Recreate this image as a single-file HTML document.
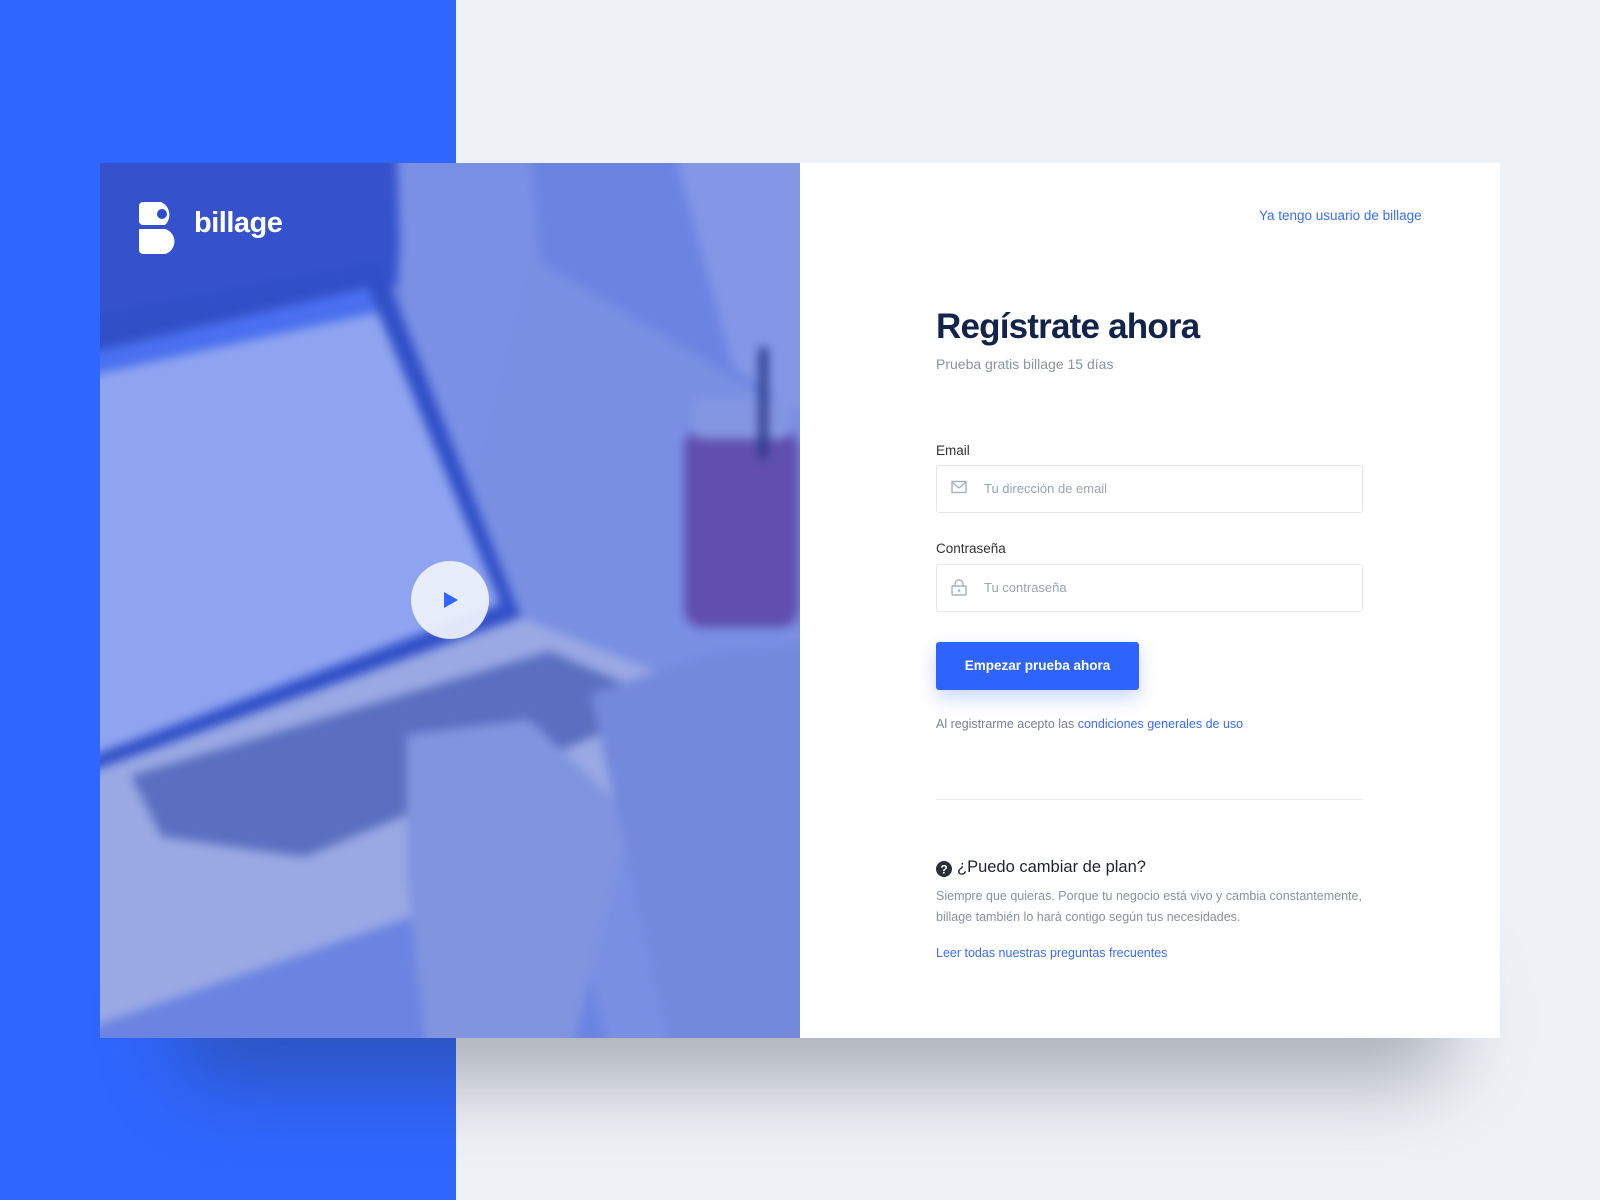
<!DOCTYPE html>
<html><head><meta charset="utf-8"><style>
*{margin:0;padding:0;box-sizing:border-box}
body{width:1600px;height:1200px;background:#eef1f5;position:relative;overflow:hidden;font-family:"Liberation Sans",sans-serif}
.blue{position:absolute;left:0;top:0;width:456px;height:1200px;background:#2f66fd}
.shadow{position:absolute;left:180px;top:960px;width:1270px;height:120px;background:rgba(40,50,70,.35);filter:blur(40px);border-radius:40px}
.card{position:absolute;left:100px;top:163px;width:1400px;height:875px;background:#fff;display:flex}
.img{width:700px;height:875px;position:relative;overflow:hidden;background:#6b84e2}
.form{position:relative;flex:1}
.a{position:absolute;white-space:nowrap}
.lnk{color:#3a6cf5}
.inp{position:absolute;left:136px;width:427px;height:48px;border:1px solid #e3e6ea;border-radius:3px}
.inp span{position:absolute;left:47px;top:15px;font-size:13px;color:#9aa3af}
.inp svg{position:absolute;left:14px;top:14px}
</style></head><body>
<div class="blue"></div>
<div class="shadow"></div>
<div class="card">
 <div class="img">
  <svg width="741" height="915" viewBox="-20 -20 726 897" preserveAspectRatio="none" style="position:absolute;left:-20px;top:-20px;filter:blur(5px)">
   <rect x="-20" y="-20" width="730" height="900" fill="#6b84e2"/>
   <polygon points="-20,-20 300,-20 290,120 -20,160" fill="#3552cc"/>
   <polygon points="290,-20 420,-20 440,200 360,330 300,300" fill="#7a90e4"/>
   <polygon points="560,-20 706,-20 706,260 620,200" fill="#8497e6"/>
   <polygon points="420,90 706,260 706,877 500,877 360,330" fill="#788fe2"/>
   <polygon points="-20,150 274,95 412,445 -20,600" fill="#3150c8"/>
   <polygon points="-20,188 262,122 392,432 -20,585" fill="#8fa4f0"/>
   <polygon points="-20,188 262,122 272,146 -20,210" fill="#4a70f0"/>
   <polygon points="-20,600 412,445 600,520 520,640 300,740 -20,850" fill="#9aa9e4"/>
   <polygon points="30,600 440,478 560,530 200,680 60,660" fill="#5a6fc0"/>
   <polygon points="300,560 420,545 520,640 460,877 320,877 300,700" fill="#8094e0"/>
   <polygon points="480,520 600,480 706,470 706,877 560,877" fill="#7389dc"/>
   <rect x="572" y="260" width="112" height="195" rx="18" fill="#604fae"/>
   <rect x="580" y="230" width="96" height="40" rx="10" fill="#8496e2"/>
   <rect x="645" y="180" width="9" height="110" rx="4" fill="#2b3a8a"/>
  </svg>
  <svg style="position:absolute;left:39px;top:39px" width="39" height="52" viewBox="0 0 39 52"><path d="M4 0h18a14 14 0 0 1 4 23v0h-22a4 4 0 0 1-4-4V4a4 4 0 0 1 4-4z" fill="#fff"/><circle cx="23" cy="12" r="5" fill="#2d4ccc"/><path d="M0 27h26a13 13 0 0 1 0 25H4a4 4 0 0 1-4-4z" fill="#fff"/></svg>
  <div class="a" style="left:94px;top:44px;color:#fff;font-size:29px;font-weight:bold;letter-spacing:-.5px">billage</div>
  <div class="a" style="left:311px;top:398px;width:78px;height:78px;border-radius:50%;background:rgba(240,243,252,.92)"></div>
  <svg class="a" style="left:343px;top:428px" width="16" height="18"><path d="M1 1L15 9L1 17z" fill="#2f66fd"/></svg>
 </div>
 <div class="form">
  <div class="a lnk" style="left:459px;top:45px;font-size:13.5px">Ya tengo usuario de billage</div>
  <div class="a" style="left:136px;top:144px;font-size:35px;font-weight:bold;color:#13244a;letter-spacing:-.8px">Regístrate ahora</div>
  <div class="a" style="left:136px;top:193px;font-size:14px;color:#8a93a2">Prueba gratis billage 15 días</div>
  <div class="a" style="left:136px;top:280px;font-size:13.5px;color:#333">Email</div>
  <div class="inp" style="top:302px"><svg width="16" height="14"><rect x="1" y="1.5" width="14" height="11" fill="none" stroke="#a8b0bc" stroke-width="1.4"/><path d="M1 2l7 6 7-6" fill="none" stroke="#a8b0bc" stroke-width="1.4"/></svg><span>Tu dirección de email</span></div>
  <div class="a" style="left:136px;top:378px;font-size:13.5px;color:#333">Contraseña</div>
  <div class="inp" style="top:401px"><svg width="16" height="17"><path d="M4 7V5a4 4 0 0 1 8 0v2" fill="none" stroke="#a8b0bc" stroke-width="1.4"/><rect x="1" y="7" width="14" height="9" rx="1" fill="none" stroke="#a8b0bc" stroke-width="1.4"/><circle cx="8" cy="11.5" r="1.3" fill="#a8b0bc"/></svg><span>Tu contraseña</span></div>
  <div class="a" style="left:136px;top:479px;width:203px;height:48px;background:#2e64fd;border-radius:3px;box-shadow:0 8px 18px rgba(46,100,253,.25);color:#fff;font-weight:bold;font-size:13.5px;text-align:center;line-height:48px">Empezar prueba ahora</div>
  <div class="a" style="left:136px;top:554px;font-size:12.5px;color:#7a828f">Al registrarme acepto las <span class="lnk">condiciones generales de uso</span></div>
  <div class="a" style="left:136px;top:636px;width:427px;height:1px;background:#e8ebef"></div>
  <svg class="a" style="left:136px;top:698px" width="16" height="16"><circle cx="8" cy="8" r="8" fill="#2b2f36"/><text x="8" y="12.5" font-size="12" font-weight="bold" fill="#fff" text-anchor="middle" font-family="Liberation Sans">?</text></svg>
  <div class="a" style="left:157px;top:695px;font-size:16.5px;color:#1d2330">¿Puedo cambiar de plan?</div>
  <div class="a" style="left:136px;top:723px;font-size:12.5px;color:#8a929e;line-height:21px">Siempre que quieras. Porque tu negocio está vivo y cambia constantemente,<br>billage también lo hará contigo según tus necesidades.</div>
  <div class="a lnk" style="left:136px;top:783px;font-size:12.5px">Leer todas nuestras preguntas frecuentes</div>
 </div>
</div>
</body></html>
